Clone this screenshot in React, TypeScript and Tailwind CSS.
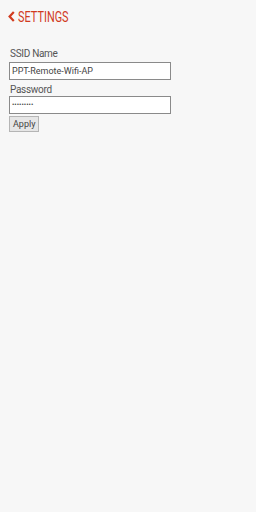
export default function App() {
    return (
        <div className="min-h-[512px] w-[256px] bg-[#f7f7f7] font-['Roboto',sans-serif]">
            {/* header */}
            <div className="flex items-center h-[32px] pl-[8px] pt-[1px]">
                <svg width="7" height="11" viewBox="0 0 7 11" className="mr-[3px]">
                    <path d="M5.8 1 L1.6 5.5 L5.8 10" fill="none" stroke="#d13b1f" strokeWidth="2.2" />
                </svg>
                <span className="text-[14px] leading-none text-[#d13b1f] scale-x-[0.78] origin-left">SETTINGS</span>
            </div>

            <div className="px-[9px] pt-[16px]">
                <label className="block text-[10px] leading-[12px] text-[#555] pl-[1px] tracking-[-0.3px]">SSID Name</label>
                <input
                    type="text"
                    defaultValue="PPT-Remote-Wifi-AP"
                    className="mt-[2px] block w-[162px] h-[18px] border border-[#8a8a8a] bg-white px-[2px] text-[9px] text-[#444] outline-none"
                />
                <label className="block mt-[4px] text-[10px] leading-[12px] text-[#555] pl-[1px] tracking-[-0.3px]">Password</label>
                <input
                    type="password"
                    defaultValue="password1"
                    className="block w-[162px] h-[18px] border border-[#8a8a8a] bg-white px-[2px] text-[7px] text-[#444] outline-none"
                />
                <button className="mt-[2px] block h-[16px] px-[3px] text-[9px] leading-none text-[#444] bg-[#e6e6e6] border border-[#b5b5b5]">
                    Apply
                </button>
            </div>
        </div>
    );
}
